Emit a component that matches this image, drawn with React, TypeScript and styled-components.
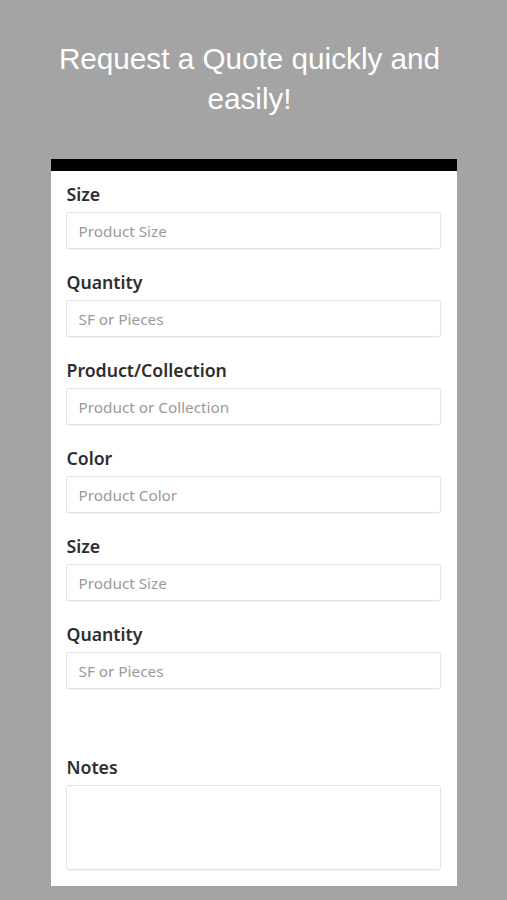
import styled, { createGlobalStyle } from "styled-components";

const GlobalStyle = createGlobalStyle`
  html, body {
    margin: 0;
    padding: 0;
    background-color: #a4a4a4;
  }
  body {
    font-family: "Liberation Sans", Arial, sans-serif;
  }
`;

const Page = styled.div`
  width: 507px;
  height: 900px;
  overflow: hidden;
  display: flex;
  flex-direction: column;
  align-items: center;
`;

// slightly left of centre, like the original
const Title = styled.h1`
  margin: 39px 8px 0 0;
  width: 420px;
  text-align: center;
  font-family: "Liberation Sans", Arial, sans-serif;
  font-weight: 400;
  font-size: 29.7px;
  line-height: 40px;
  color: #ffffff;
`;

const Card = styled.form`
  margin-top: 40px;
  width: 406px;
  background: #ffffff;
  border-top: 12px solid #000000;
  box-sizing: border-box;
  padding: 12px 16px 16px 15px;
  display: flex;
  flex-direction: column;
`;

const Field = styled.div<{ gap?: number }>`
  display: flex;
  flex-direction: column;
  margin-top: ${(p) => p.gap ?? 0}px;
`;

const Label = styled.label`
  font-family: "Noto Sans", "Open Sans", sans-serif;
  font-weight: 600;
  font-size: 17.7px;
  line-height: 22px;
  color: #2e2e2e;
  margin-bottom: 7px;
  padding-left: 1px;
`;

const Input = styled.input`
  box-sizing: border-box;
  height: 37px;
  width: 100%;
  border: 1px solid #e3e3e3;
  border-radius: 3px;
  box-shadow: 0 1px 1px rgba(0, 0, 0, 0.04);
  padding: 0 12px;
  font-family: "Noto Sans", "Open Sans", sans-serif;
  font-size: 15.3px;
  color: #333;
  outline: none;

  &::placeholder {
    color: #9a9a9a;
  }
`;

const Notes = styled.textarea`
  box-sizing: border-box;
  height: 85px;
  width: 100%;
  border: 1px solid #e3e3e3;
  border-radius: 3px;
  box-shadow: 0 1px 1px rgba(0, 0, 0, 0.04);
  padding: 8px 12px;
  resize: none;
  outline: none;
`;

const fields = [
  { label: "Size", placeholder: "Product Size" },
  { label: "Quantity", placeholder: "SF or Pieces" },
  { label: "Product/Collection", placeholder: "Product or Collection" },
  { label: "Color", placeholder: "Product Color" },
  { label: "Size", placeholder: "Product Size" },
  { label: "Quantity", placeholder: "SF or Pieces" },
];

export default function App() {
  return (
    <>
      <GlobalStyle />
      <Page>
        <Title>Request a Quote quickly and easily!</Title>
        <Card onSubmit={(e) => e.preventDefault()}>
          {fields.map((f, i) => (
            <Field key={i} gap={i === 0 ? 0 : 22}>
              <Label>{f.label}</Label>
              <Input placeholder={f.placeholder} />
            </Field>
          ))}
          <Field gap={67}>
            <Label>Notes</Label>
            <Notes />
          </Field>
        </Card>
      </Page>
    </>
  );
}
